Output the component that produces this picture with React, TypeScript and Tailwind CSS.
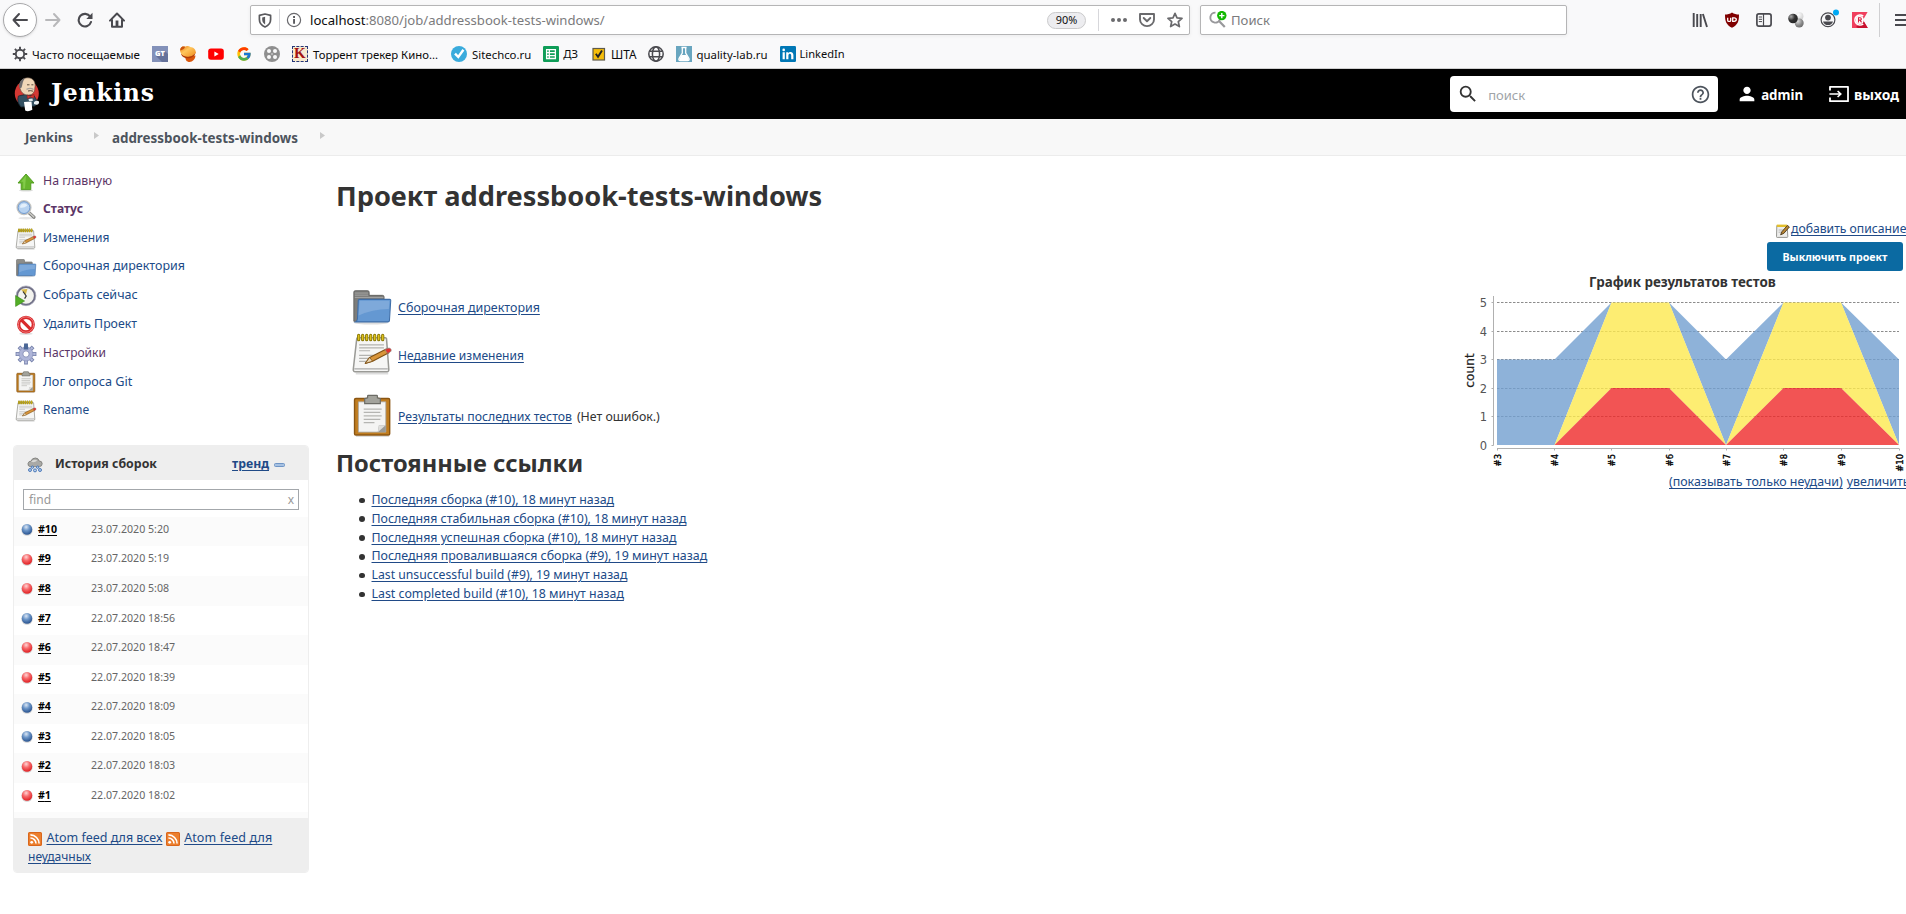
import type { ReactNode } from 'react';
import { FcGoogle } from 'react-icons/fc';
import { MdHelpOutline, MdPerson, MdSearch } from 'react-icons/md';

/* ---------- browser chrome icons ---------- */

const Svg = ({ w = 16, h = 16, vb = '0 0 16 16', children, className = '' }: { w?: number; h?: number; vb?: string; children: ReactNode; className?: string }) => (
  <svg width={w} height={h} viewBox={vb} fill="none" className={`block shrink-0 ${className}`}>
    {children}
  </svg>
);

const ArrowLeft = () => (
  <Svg>
    <path d="M15 8H1.5M7 2L1.5 8L7 14" stroke="#4a4a4f" strokeWidth="2" strokeLinecap="round" strokeLinejoin="round" />
  </Svg>
);
const ArrowRight = () => (
  <Svg>
    <path d="M1 8H14.5M9 2L14.5 8L9 14" stroke="#b8b8ba" strokeWidth="2" strokeLinecap="round" strokeLinejoin="round" />
  </Svg>
);
const Reload = () => (
  <Svg>
    <path d="M13.2 4.6A6.3 6.3 0 1 0 14 10" stroke="#4a4a4f" strokeWidth="2.1" strokeLinecap="round" />
    <path d="M15.5 0.8V7H9.3Z" fill="#4a4a4f" />
  </Svg>
);
const Home = () => (
  <Svg>
    <path d="M1 8.6L8 1.5L15 8.6M3 8V14.8H13V8" stroke="#4a4a4f" strokeWidth="2" strokeLinecap="round" strokeLinejoin="round" />
    <path d="M6.6 8.5h2.8V15H6.6z" fill="#4a4a4f" />
  </Svg>
);
const Shield = () => (
  <Svg w={14} h={15} vb="0 0 14 15">
    <path d="M7 1L12.6 2.4V6.5C12.6 10 10.3 12.6 7 14C3.7 12.6 1.4 10 1.4 6.5V2.4Z" stroke="#5a5a5e" strokeWidth="1.7" strokeLinejoin="round" />
    <path d="M7.1 3.7L4.2 4.5V6.7C4.2 8.9 5.4 10.4 7.1 11.4Z" fill="#5a5a5e" />
  </Svg>
);
const Info = () => (
  <Svg>
    <circle cx="8" cy="8" r="6.6" stroke="#6a6a6e" strokeWidth="1.2" />
    <path d="M7.1 7h1.9v4.8H7.1zM7.1 4.1h1.9v1.8H7.1z" fill="#5a5a5e" />
  </Svg>
);
const Dots = () => (
  <Svg w={18}>
    <circle cx="3" cy="8" r="2" fill="#6a6a6d" />
    <circle cx="9" cy="8" r="2" fill="#6a6a6d" />
    <circle cx="15" cy="8" r="2" fill="#6a6a6d" />
  </Svg>
);
const Pocket = () => (
  <Svg>
    <path d="M1 2H15V7.5A7 6.6 0 0 1 1 7.5Z" stroke="#6a6a6d" strokeWidth="1.9" strokeLinejoin="round" />
    <path d="M4.7 6L8 9.2L11.3 6" stroke="#6a6a6d" strokeWidth="1.9" strokeLinecap="round" strokeLinejoin="round" />
  </Svg>
);
const Star = () => (
  <Svg>
    <path d="M8 1.3L10 5.9L15 6.4L11.3 9.7L12.4 14.6L8 12.1L3.6 14.6L4.7 9.7L1 6.4L6 5.9Z" stroke="#6a6a6d" strokeWidth="1.7" strokeLinejoin="round" />
  </Svg>
);
const SearchAdd = () => (
  <Svg w={18} h={18} vb="0 0 18 18">
    <path d="M6.5 1.6A5 5 0 1 0 11 8.4" stroke="#98989b" strokeWidth="1.9" />
    <path d="M10 10L15.8 16" stroke="#98989b" strokeWidth="2.2" />
    <circle cx="12.8" cy="4.6" r="4.7" fill="#12b800" />
    <path d="M12.8 2V7.2M10.2 4.6H15.4" stroke="#fff" strokeWidth="1.4" />
  </Svg>
);
const Library = () => (
  <Svg>
    <path d="M1.7 1V15M5.2 2V15M8.7 2V15M10.9 2L15 15" stroke="#4a4a4f" strokeWidth="1.9" />
  </Svg>
);
const UBlock = () => (
  <Svg>
    <path d="M8 0.4C10 1.9 12.5 2.4 15 2.4C15 9.5 13.8 12.6 8 15.7C2.2 12.6 1 9.5 1 2.4C3.5 2.4 6 1.9 8 0.4Z" fill="#800000" />
    <path d="M3.7 5.8V8.4Q3.7 9.4 4.8 9.4H5.7Q6.7 9.4 6.7 8.4V5.8M8.7 5.9V9.4H10.1Q12.3 9.2 12.3 7.6T10.1 5.9Z" stroke="#fff" strokeWidth="1.3" />
  </Svg>
);
const Sidebar = () => (
  <Svg>
    <rect x="0.9" y="1.9" width="14.2" height="12.2" rx="2" stroke="#4a4a4f" strokeWidth="1.7" />
    <path d="M7.5 2V14" stroke="#4a4a4f" strokeWidth="1.2" />
    <path d="M2.8 5H6M2.8 7.3H6M2.8 9.6H6" stroke="#4a4a4f" strokeWidth="1" />
  </Svg>
);
const Spheres = () => (
  <Svg>
    <defs>
      <radialGradient id="sphDark" cx="0.3" cy="0.3" r="0.8"><stop offset="0" stopColor="#aaa" /><stop offset="0.5" stopColor="#333" /><stop offset="1" stopColor="#222" /></radialGradient>
      <radialGradient id="sphGrey" cx="0.35" cy="0.3" r="0.8"><stop offset="0" stopColor="#ddd" /><stop offset="0.6" stopColor="#888" /><stop offset="1" stopColor="#666" /></radialGradient>
      <radialGradient id="sphLight" cx="0.35" cy="0.3" r="0.8"><stop offset="0" stopColor="#fff" /><stop offset="1" stopColor="#ccc" /></radialGradient>
    </defs>
    <circle cx="11.5" cy="4.2" r="3.9" fill="url(#sphLight)" />
    <circle cx="11.2" cy="11" r="4.5" fill="url(#sphGrey)" />
    <circle cx="5" cy="6.5" r="4.8" fill="url(#sphDark)" />
  </Svg>
);
const Account = () => (
  <Svg w={20} h={20} vb="0 0 20 20">
    <circle cx="8" cy="11.8" r="6.9" stroke="#4a4a4f" strokeWidth="1.2" />
    <circle cx="8" cy="9.6" r="2.9" fill="#4a4a4f" />
    <path d="M3 13.4H13C12.4 15.8 10.4 17 8 17S3.6 15.8 3 13.4Z" fill="#4a4a4f" />
    <circle cx="16" cy="4.6" r="3" fill="#00a9f4" />
  </Svg>
);
const Checker = () => (
  <Svg>
    <path d="M0 0H15.6L11 8L15.8 16H0Z" fill="#f0405e" />
    <path d="M4 15L11 8L15.8 16H6Z" fill="#c8102e" />
    <path d="M11.2 4.2A5 5 0 1 0 11.2 11.8" stroke="#fff" strokeWidth="1.7" />
    <circle cx="7.8" cy="8" r="4" fill="#fff" />
    <path d="M6.5 10.4V5.8H8.1Q9.3 5.8 9.3 7T8.1 8.1H6.8M8.1 8.1L9.5 10.4" stroke="#d81e3c" strokeWidth="1.1" />
  </Svg>
);

/* ---------- bookmark icons ---------- */

const Gear = () => (
  <Svg>
    <g stroke="#4a4a4f" strokeWidth="1.9">
      <path d="M8 0.8V3.4M8 12.6V15.2M0.8 8H3.4M12.6 8H15.2M2.9 2.9L4.8 4.8M11.2 11.2L13.1 13.1M2.9 13.1L4.8 11.2M11.2 4.8L13.1 2.9" />
      <circle cx="8" cy="8" r="4.2" />
    </g>
  </Svg>
);
const GT = () => (
  <div className="relative flex size-4 items-center justify-center overflow-hidden bg-[#8391b9] font-['Open_Sans'] text-[7.5px] font-extrabold text-white">
    <svg width="16" height="16" className="absolute inset-0"><path d="M4 10L13 5L16 8V16H10Z" fill="#66729a" /></svg>
    <span className="relative">GT</span>
  </div>
);
const Ball = () => (
  <Svg>
    <defs>
      <linearGradient id="ballTop" x1="0" y1="0" x2="1" y2="1"><stop offset="0" stopColor="#e8780f" /><stop offset="0.4" stopColor="#ffc65c" /><stop offset="1" stopColor="#ee8a1c" /></linearGradient>
    </defs>
    <path d="M5.4 9.5H15.4C15.6 13 12.4 16 9.6 16C6.6 16 5 14 5.4 9.5Z" fill="#d9560c" />
    <path d="M1 7C4 11.5 10 10.5 15.8 6C14.6 11.6 9.6 12.9 5.4 12C3 11.4 1 9.5 1 7Z" fill="#b23c08" />
    <path d="M0.3 3C1.6 0 3.6 0.6 5 0.8C6.6 -0.4 9 0 10.4 1C13.6 1.2 16 3.8 15.9 6.6C13.6 10 10 10.8 7.4 10.8C2.6 10.6 -0.6 7 0.3 3Z" fill="url(#ballTop)" />
    <path d="M0.3 3C1.6 0 3.6 0.6 5 0.8C4.6 2.6 3.4 3.8 0.3 4.4Z" fill="#c9530c" />
  </Svg>
);
const YouTube = () => (
  <Svg>
    <rect x="0.2" y="2.4" width="15.6" height="11.4" rx="2.8" fill="#f00" />
    <path d="M6.4 5.6V10.6L10.7 8.1Z" fill="#fff" />
  </Svg>
);
const Reel = () => (
  <Svg>
    <circle cx="8" cy="8" r="8" fill="#8f8f8f" />
    <g fill="#f9f9fa"><circle cx="5" cy="5" r="2" /><circle cx="11" cy="5" r="2" /><circle cx="5" cy="11" r="2" /><circle cx="11" cy="11" r="2" /><circle cx="8" cy="8" r="0.7" /></g>
  </Svg>
);
const KStamp = () => (
  <div className="flex size-4 items-center justify-center border border-dashed border-[#26377a] bg-[#f6e9cf] font-['Liberation_Serif'] text-[15px] leading-none font-bold text-[#a31212]">K</div>
);
const Tick = () => (
  <Svg>
    <circle cx="8" cy="8" r="8" fill="#3aabdc" />
    <path d="M4 7.6L7.3 11L12.4 3.8" stroke="#fff" strokeWidth="2.4" />
  </Svg>
);
const Sheet = () => (
  <Svg>
    <rect width="16" height="16" rx="1.2" fill="#0f9d58" />
    <path d="M3.6 3.7H12.4V12.5H3.6ZM3.6 6.6H12.4M3.6 9.6H12.4M6.3 3.7V12.5" stroke="#fff" strokeWidth="1.3" />
  </Svg>
);
const YellowCheck = () => (
  <Svg>
    <rect x="2" y="2.5" width="11.5" height="11.5" fill="#f5bd0b" stroke="#5f5a4a" strokeWidth="1.2" />
    <path d="M4.8 7.8L7 10.8L11 4.5" stroke="#222" strokeWidth="1.9" />
  </Svg>
);
const GlobeIcon = () => (
  <Svg>
    <g stroke="#4a4a4f" strokeWidth="1.5">
      <circle cx="8" cy="8" r="7.2" />
      <ellipse cx="8" cy="8" rx="3.6" ry="7.2" />
      <path d="M1.6 5.3H14.4M1.6 10.7H14.4" />
    </g>
  </Svg>
);
const Flask = () => (
  <Svg>
    <rect width="16" height="16" fill="#68a5bf" />
    <path d="M5.4 1.5H10.6M6.3 2V7L3 12.6Q2.4 14.6 4.4 14.6H11.6Q13.6 14.6 13 12.6L9.7 7V2" stroke="#fff" strokeWidth="1.3" />
    <path d="M5.5 9H10.5L13 13.2L12 14.5H4L3.2 13.2Z" fill="#fff" />
  </Svg>
);
const LinkedIn = () => (
  <Svg>
    <rect width="16" height="16" rx="1.2" fill="#0077b5" />
    <path d="M2.6 6.2H4.8V13.2H2.6ZM6.2 6.2H8.3V7.2C9.6 5.3 13.4 5.6 13.4 9V13.2H11.2V9.4C11.2 7.2 8.4 7.4 8.4 9.4V13.2H6.2Z" fill="#fff" />
    <circle cx="3.7" cy="3.9" r="1.3" fill="#fff" />
  </Svg>
);

/* ---------- Jenkins icons ---------- */

const Butler = () => (
  <Svg w={26} h={36} vb="0 0 26 36">
    <ellipse cx="12.8" cy="17.4" rx="12" ry="13" fill="#d33833" />
    <path d="M4.4 20L11 18.6L20 19.6L23.6 26L21 30L7 31Q2.4 26 4.4 20Z" fill="#335061" stroke="#1c2b36" strokeWidth="0.8" />
    <path d="M6 12.4C4 6 9 1.5 14 1.8C20 2 22 7 20.8 12C20.8 16 18.6 19 14.8 19C10 19 7.4 17 6 12.4Z" fill="#f0d6b7" stroke="#5b4a3c" strokeWidth="0.6" />
    <path d="M5.8 12.4C4 6 8 2.4 11 2.2C8.5 5 8.6 8.6 7.6 11.6Z" fill="#6d6b6d" />
    <path d="M13 8.8H15.5M17.4 8.8H19.4M14 15Q16.5 14.2 19 15.2" stroke="#4a3b30" strokeWidth="0.9" />
    <path d="M12.5 13.4Q16.5 11.4 19.6 13.6" stroke="#a8a09a" strokeWidth="1.2" />
    <path d="M13 19L16.3 20.1L20 18.4V22.2L16.6 21.2L13.4 22.8Z" fill="#d33833" stroke="#7d1c1a" strokeWidth="0.5" />
    <path d="M14.5 23L18.5 22.4L18.8 25H15Z" fill="#dfe6ea" />
    <path d="M10 26L17.5 25.4L18.3 33.8Q14.5 36 11.2 34.6Z" fill="#fff" />
    <path d="M20 26Q23 23.8 25 25.6Q25.6 28.6 22.4 28.8L20 28Z" fill="#e8eef0" />
  </Svg>
);
const Logout = () => (
  <Svg w={20} h={18} vb="0 0 20 18">
    <path d="M1 5.4V1.8H19V16.2H1V12.4" stroke="#fff" strokeWidth="1.8" strokeLinejoin="round" />
    <path d="M0.4 9H11.4M8.6 6L11.8 9L8.6 12" stroke="#fff" strokeWidth="1.6" />
  </Svg>
);

const Up = () => (
  <Svg w={22} h={22} vb="0 0 22 22">
    <ellipse cx="11" cy="19.3" rx="7" ry="1.3" fill="#ddd" />
    <path d="M11 3L19 12H15.8V18.6H6.2V12H3Z" fill="#66b52c" stroke="#4c981a" strokeWidth="0.9" strokeLinejoin="round" />
    <path d="M11 4.6L6 10.8H8.2V17.6H10Z" fill="#8fd455" opacity="0.7" />
  </Svg>
);
const Magnifier = () => (
  <Svg w={22} h={22} vb="0 0 22 22">
    <ellipse cx="11" cy="19.2" rx="7.6" ry="1.2" fill="#e6e6e6" />
    <path d="M14 13.8L19 18.2" stroke="#7b7b78" strokeWidth="3.2" strokeLinecap="round" />
    <path d="M14.4 13.9L18.8 17.9" stroke="#c8c8c4" strokeWidth="1.5" strokeLinecap="round" />
    <circle cx="9" cy="8.6" r="6.9" fill="#b7d2f0" stroke="#c4c4c1" strokeWidth="1.4" />
    <circle cx="9" cy="8.6" r="5.9" stroke="#5d8cc9" strokeWidth="0.8" />
    <path d="M5 8.5A4 4 0 0 1 12.4 6.4Q9 9.4 5 8.5Z" fill="#e3effb" />
  </Svg>
);
const Notepad = ({ s = 22 }: { s?: number }) => (
  <Svg w={s} h={s} vb="0 0 44 44">
    <path d="M5 42.5H39" stroke="#ddd" strokeWidth="2" />
    <path d="M6 6Q6 5 7 5H36Q37 5 37.2 6L39.6 38Q39.8 40.6 37.6 40.6H4.4Q2.2 40.6 2.4 38Z" fill="#f6f6f5" stroke="#9a9a96" strokeWidth="1.6" />
    <path d="M3.4 37.6H38.6" stroke="#aaa" strokeWidth="1.3" />
    <path d="M8.5 12.5H34.5M8.5 15.6H34.5M8.5 18.6H20M8.5 23.4H30M8.5 26.6H28M8.5 29.8H20" stroke="#b3b3b0" strokeWidth="1.2" />
    <path d="M8 2.5V7M12.2 2.5V7M16.4 2.5V7M20.6 2.5V7M24.8 2.5V7M29 2.5V7M33.2 2.5V7" stroke="#8c7a06" strokeWidth="3.4" strokeLinecap="round" />
    <path d="M8 2.6V6.8M12.2 2.6V6.8M16.4 2.6V6.8M20.6 2.6V6.8M24.8 2.6V6.8M29 2.6V6.8M33.2 2.6V6.8" stroke="#dcc01e" strokeWidth="1.6" strokeLinecap="round" />
    <path d="M15 31.8L19.5 25.6L37 16.8L39.6 20.8L22.6 29.6Z" fill="#d9953a" stroke="#7f5114" strokeWidth="1.2" strokeLinejoin="round" />
    <path d="M15 31.8L19.5 25.6L22.6 29.6Z" fill="#ecd7b4" stroke="#7f5114" strokeWidth="0.8" />
    <path d="M35.6 17.4L38.6 15.9Q41.4 15.2 42 17.4Q42.6 19.2 41 20L38.2 21.4Z" fill="#e4302f" stroke="#8a8a86" strokeWidth="0.7" />
  </Svg>
);
const Folder = ({ s = 22 }: { s?: number }) => (
  <Svg w={s} h={s} vb="0 0 44 44">
    <ellipse cx="21" cy="38.6" rx="18" ry="1.8" fill="#ddd" />
    <path d="M3 37V6.4Q3 5 4.4 5H17.6Q19 5 19 6.6V9.8H33Q34.6 9.8 34.6 11.4V37Z" fill="#7d7d7b" stroke="#5f5f5d" />
    <path d="M4 7.4H18M4 9.6H18M4 12H34" stroke="#aaaaa7" strokeWidth="0.9" />
    <path d="M7.6 15.2Q7.7 14 9 14H40.6Q41.8 14 41.6 15.4L40.3 36Q40.2 37.6 38.6 37.6H4.8Q6.6 36.6 6.8 34Z" fill="#6498d2" stroke="#3f6ea8" strokeWidth="1.1" />
    <path d="M9 15.4H40.2L39.6 24Q22 24 8 31Z" fill="#8fb4e0" opacity="0.6" />
  </Svg>
);
const ClockPlay = () => (
  <Svg w={22} h={22} vb="0 0 22 22">
    <circle cx="11" cy="10.8" r="8.9" fill="#f3f3ee" stroke="#6f6f86" strokeWidth="2" />
    <circle cx="11" cy="10.8" r="9.9" stroke="#a6a6b8" strokeWidth="0.7" />
    <path d="M6 4.6L10.8 9.8L12.4 4Z" fill="#d7b84a" />
    <path d="M8 6.5L11.2 11L9.6 13.6" stroke="#333" strokeWidth="1.2" />
    <path d="M0.6 10.6L9.6 16L0.6 21.4Z" fill="#53ae27" stroke="#3b8915" strokeWidth="0.6" />
  </Svg>
);
const Forbidden = () => (
  <Svg w={22} h={22} vb="0 0 22 22">
    <ellipse cx="11" cy="19.8" rx="6.6" ry="1" fill="#ddd" />
    <circle cx="11" cy="10.6" r="7.3" fill="#fff" stroke="#d92a2c" strokeWidth="3.2" />
    <path d="M6 5.7L16 15.6" stroke="#d92a2c" strokeWidth="3.2" />
    <circle cx="11" cy="10.6" r="7.7" stroke="#f4898a" strokeWidth="0.8" />
  </Svg>
);
const Cog = () => (
  <Svg w={22} h={22} vb="0 0 22 22">
    <g stroke="#7580aa" strokeWidth="3.8">
      <path d="M11 0.6V21.4M0.6 11H21.4M3.9 3.9L18.1 18.1M3.9 18.1L18.1 3.9" />
    </g>
    <g stroke="#b3badb" strokeWidth="2.3">
      <path d="M11 1.4V20.6M1.4 11H20.6M4.5 4.5L17.5 17.5M4.5 17.5L17.5 4.5" />
    </g>
    <circle cx="11" cy="11" r="7" fill="#aeb5d8" stroke="#8089b3" strokeWidth="0.6" />
    <path d="M9.3 0.8H12.7L13.4 6.4H8.6Z" fill="#4a6796" />
    <circle cx="11" cy="11" r="3.2" fill="#fff" stroke="#8a92ba" strokeWidth="1" />
  </Svg>
);
const Clipboard = ({ s = 22 }: { s?: number }) => (
  <Svg w={s} h={s} vb="0 0 44 44">
    <path d="M5 43.4H39" stroke="#ddd" strokeWidth="1.2" />
    <rect x="3.6" y="4.6" width="36" height="37.4" rx="1.4" fill="#c07d20" stroke="#8a5512" strokeWidth="1.4" />
    <path d="M7.6 8H35.6V39H7.6Z" fill="#f4f4f3" stroke="#a9a9a6" strokeWidth="0.8" />
    <path d="M35.6 32H28.6L27.4 39H35.6Z" fill="#9b9b98" />
    <path d="M28.4 32H35.4L27.6 39Z" fill="#dededc" />
    <path d="M13 15.4H31.4M13 18.9H30M13 22.4H31.4M13 25.9H30M13 29.4H24" stroke="#b5b5b2" strokeWidth="1.3" />
    <path d="M17 4V2Q17 1.4 17.6 1.4H26.4Q27 1.4 27 2V4L30 4.8V9.8H14V4.8Z" fill="#a3a39c" stroke="#6c6c66" strokeWidth="1.2" />
  </Svg>
);
const Rain = () => (
  <Svg>
    <g fill="#a9a9a6" stroke="#777774" strokeWidth="0.8">
      <path d="M3 9.6Q0.6 9 1 6.4Q1.6 4 4 4.2Q5 1 8.4 1Q11.6 1.2 12.2 4Q15.2 4 15.2 6.8Q15 9.4 12.6 9.6Z" />
    </g>
    <path d="M4 4.6Q7 1.4 10.4 3.6Q7 6.4 4 4.6Z" fill="#d8d8d6" />
    <g fill="#b7cdea" stroke="#3f70b3" strokeWidth="0.9">
      <circle cx="3" cy="13" r="1.5" /><circle cx="8" cy="13.4" r="1.5" /><circle cx="13" cy="13" r="1.5" /><circle cx="5.4" cy="10.2" r="1.2" /><circle cx="10.6" cy="10.2" r="1.2" />
    </g>
  </Svg>
);
const Orb = ({ ok }: { ok: boolean }) => (
  <Svg w={12} h={13} vb="0 0 12 13">
    <defs>
      <radialGradient id={ok ? 'orbBlue' : 'orbRed'} cx="0.42" cy="0.28" r="0.72">
        <stop offset="0" stopColor={ok ? '#dbe6f4' : '#ffd5d5'} />
        <stop offset="0.45" stopColor={ok ? '#6d97c9' : '#f76a6c'} />
        <stop offset="1" stopColor={ok ? '#28528f' : '#e01f22'} />
      </radialGradient>
    </defs>
    <ellipse cx="6" cy="7" rx="5.8" ry="5.9" fill="#d9d9d9" />
    <ellipse cx="6" cy="6.4" rx="5.2" ry="5.4" fill={ok ? 'url(#orbBlue)' : 'url(#orbRed)'} />
  </Svg>
);
const Rss = () => (
  <svg width="14" height="14" viewBox="0 0 14 14" fill="none" className="mr-[4.5px] inline-block align-[-3.5px]">
    <rect width="14" height="14" rx="1.6" fill="#ec7f2e" />
    <rect x="0.5" y="0.5" width="13" height="13" rx="1.4" stroke="#d9661c" />
    <circle cx="3.7" cy="10.3" r="1.4" fill="#fff" />
    <path d="M2.4 6A5.6 5.6 0 0 1 8 11.6M2.4 2.9A8.7 8.7 0 0 1 11.1 11.6" stroke="#fff" strokeWidth="1.6" />
  </svg>
);
const EditNote = () => (
  <Svg w={14} h={14} vb="0 0 14 14">
    <path d="M0.8 1.6H11.2L11.8 12.6Q11.8 13.4 11 13.4H1.2Q0.4 13.4 0.5 12.6Z" fill="#ededeb" stroke="#8b8b87" strokeWidth="0.9" />
    <path d="M0.8 0.6H11V3H0.8Z" fill="#e3bf2d" />
    <path d="M2.6 6H8M2.6 8.2H6" stroke="#aaa" strokeWidth="0.8" />
    <path d="M4.6 10.8L6 7.6L11.4 1.4L13.4 3L7.8 9.4Z" fill="#b98533" stroke="#49381b" strokeWidth="0.9" />
  </Svg>
);

/* ---------- sections ---------- */

const bookmarks: { icon: ReactNode; text?: string; left: string; size?: string }[] = [
  { icon: <Gear />, text: 'Часто посещаемые', left: 'ml-[12px]', size: 'text-[11.55px]' },
  { icon: <GT />, left: 'ml-[12px]' },
  { icon: <Ball />, left: 'ml-[12px]' },
  { icon: <YouTube />, left: 'ml-[12px]' },
  { icon: <FcGoogle size={16} />, left: 'ml-[12px]' },
  { icon: <Reel />, left: 'ml-[12px]' },
  { icon: <KStamp />, text: 'Торрент трекер Кино...', left: 'ml-[12px]', size: 'ml-[1px] text-[11.35px]' },
  { icon: <Tick />, text: 'Sitechco.ru', left: 'ml-[13px]', size: 'ml-[1px] text-[11.35px]' },
  { icon: <Sheet />, text: 'ДЗ', left: 'ml-[12px]', size: 'text-[11.3px]' },
  { icon: <YellowCheck />, text: 'ШТА', left: 'ml-[13px]', size: 'text-[11.8px]' },
  { icon: <GlobeIcon />, left: 'ml-[12px]' },
  { icon: <Flask />, text: 'quality-lab.ru', left: 'ml-[12px]', size: 'text-[11.4px]' },
  { icon: <LinkedIn />, text: 'LinkedIn', left: 'ml-[12px]', size: 'text-[11.1px]' },
];

const Toolbar = () => (
  <div className="h-[69px] border-b border-[#cfcfcf] bg-[#f9f9fa] text-[#0c0c0d]">
    <div className="flex h-[40px] items-center">
      <div className="ml-[3px] flex size-[34px] shrink-0 items-center justify-center rounded-full border border-[#a9a9ab] bg-white shadow-sm">
        <ArrowLeft />
      </div>
      <div className="ml-[8px]"><ArrowRight /></div>
      <div className="ml-[16px]"><Reload /></div>
      <div className="ml-[16px]"><Home /></div>
      <div className="ml-[125px] flex h-[30px] w-[940px] shrink-0 items-center rounded-[2px] border border-[#b5b5b6] bg-white shadow-[0_1px_4px_rgba(0,0,0,0.06)]">
        <div className="ml-[7px]"><Shield /></div>
        <div className="ml-[7px] h-[22px] w-px bg-[#d7d7db]" />
        <div className="ml-[6px]"><Info /></div>
        <div className="mt-[2px] ml-[8px] text-[13.14px] whitespace-pre text-[#0c0c0d]">
          localhost<span className="text-[#7b7b7d]">:8080/job/addressbook-tests-windows/</span>
        </div>
        <div className="mt-[1px] ml-auto flex h-[17px] w-[39px] items-center justify-center rounded-full border border-[#cacacb] bg-[#ededf0] text-[10.9px]">90%</div>
        <div className="ml-[12px] h-[22px] w-px bg-[#d7d7db]" />
        <div className="ml-[10px]"><Dots /></div>
        <div className="ml-[12px]"><Pocket /></div>
        <div className="mr-[6px] ml-[12px]"><Star /></div>
      </div>
      <div className="ml-[10px] flex h-[30px] w-[367px] shrink-0 items-center rounded-[2px] border border-[#b5b5b6] bg-white shadow-[0_1px_4px_rgba(0,0,0,0.06)]">
        <div className="ml-[8px]"><SearchAdd /></div>
        <div className="mt-[2px] ml-[4px] text-[13.1px] text-[#7b7b7d]">Поиск</div>
      </div>
      <div className="ml-[125px]"><Library /></div>
      <div className="ml-[16px]"><UBlock /></div>
      <div className="ml-[16px]"><Sidebar /></div>
      <div className="ml-[16px]"><Spheres /></div>
      <div className="-mt-[4px] ml-[16px]"><Account /></div>
      <div className="ml-[12px]"><Checker /></div>
      <div className="ml-[11px] h-[34px] w-px shrink-0 bg-[#d0d0d2]" />
      <div className="ml-[15px] flex w-[16px] shrink-0 flex-col gap-[3px]">
        <div className="h-[2px] bg-[#4a4a4f]" />
        <div className="h-[2px] bg-[#4a4a4f]" />
        <div className="h-[2px] bg-[#4a4a4f]" />
      </div>
    </div>
    <div className="flex h-[28px] items-center">
      {bookmarks.map((b, i) => (
        <div key={i} className={`flex items-center gap-[4px] whitespace-nowrap ${b.left}`}>
          <div className="shrink-0">{b.icon}</div>
          {b.text && <span className={`pt-[1px] ${b.size}`}>{b.text}</span>}
        </div>
      ))}
    </div>
  </div>
);

const Header = () => (
  <div className="flex h-[50px] items-center bg-black text-white">
    <div className="ml-[14px]"><Butler /></div>
    <div className="-mt-[1px] ml-[11px] font-['DejaVu_Serif'] text-[23.5px] font-bold tracking-[0.7px]">Jenkins</div>
    <div className="ml-auto flex h-[36px] w-[268px] items-center rounded-[4px] bg-white">
      <MdSearch size={22} className="ml-[7px] text-[#333]" />
      <span className="mt-[3px] ml-[9px] text-[13px] text-[#a0a4a8]">поиск</span>
      <MdHelpOutline size={21} className="mr-[7px] ml-auto text-[#4d545d]" />
    </div>
    <MdPerson size={22} className="ml-[18px]" />
    <span className="mt-[3px] ml-[3px] text-[13.3px] font-bold">admin</span>
    <div className="ml-[26px]"><Logout /></div>
    <span className="mt-[3px] mr-[7px] ml-[5px] text-[13.8px] font-bold">выход</span>
  </div>
);

const Crumb = () => (
  <svg width="5" height="7" viewBox="0 0 5 7"><path d="M0 0L5 3.5L0 7Z" fill="#c9c9c9" /></svg>
);

const Breadcrumbs = () => (
  <div className="flex h-[37px] items-center border-b border-[#ececec] bg-[#f8f8f8] font-bold text-[#4d545d]">
    <span className="mt-[2px] ml-[25px] text-[13.15px]">Jenkins</span>
    <span className="-mt-[3px] ml-[21px]"><Crumb /></span>
    <span className="mt-[2px] ml-[13px] text-[13.38px]">addressbook-tests-windows</span>
    <span className="-mt-[3px] ml-[22px]"><Crumb /></span>
  </div>
);

const tasks: { icon: ReactNode; text: string; cls: string }[] = [
  { icon: <Up />, text: 'На главную', cls: 'text-[#5c3566] text-[12.33px]' },
  { icon: <Magnifier />, text: 'Статус', cls: 'text-[#5c3566] text-[12.1px] font-bold' },
  { icon: <Notepad />, text: 'Изменения', cls: 'text-[#204a87] text-[12px]' },
  { icon: <Folder />, text: 'Сборочная директория', cls: 'text-[#204a87] text-[12.46px]' },
  { icon: <ClockPlay />, text: 'Собрать сейчас', cls: 'text-[#204a87] text-[12.55px]' },
  { icon: <Forbidden />, text: 'Удалить Проект', cls: 'text-[#204a87] text-[12.3px]' },
  { icon: <Cog />, text: 'Настройки', cls: 'text-[#5c3566] text-[12.04px]' },
  { icon: <Clipboard />, text: 'Лог опроса Git', cls: 'text-[#204a87] text-[12.7px]' },
  { icon: <Notepad />, text: 'Rename', cls: 'text-[#204a87] text-[11.95px]' },
];

const builds: [number, string, boolean][] = [
  [10, '23.07.2020 5:20', true],
  [9, '23.07.2020 5:19', false],
  [8, '23.07.2020 5:08', false],
  [7, '22.07.2020 18:56', true],
  [6, '22.07.2020 18:47', false],
  [5, '22.07.2020 18:39', false],
  [4, '22.07.2020 18:09', true],
  [3, '22.07.2020 18:05', true],
  [2, '22.07.2020 18:03', false],
  [1, '22.07.2020 18:02', false],
];

const link = 'text-[#204a87] underline decoration-1 underline-offset-2';

const Side = () => (
  <div className="w-[309px] shrink-0">
    <div className="pt-[10px] pl-[15px]">
      {tasks.map((t) => (
        <div key={t.text} className="flex h-[28.67px] items-center">
          <div className="pt-[3px]">{t.icon}</div>
          <span className={`mt-[1px] ml-[6px] whitespace-nowrap ${t.cls}`}>{t.text}</span>
        </div>
      ))}
    </div>
    <div className="mt-[21px] ml-[13px] h-[428px] overflow-hidden rounded-[4px] border border-[#eee]">
      <div className="flex h-[34px] items-center bg-[#eee]">
        <div className="mt-[4px] ml-[13px]"><Rain /></div>
        <span className="mt-[2px] ml-[12px] text-[12.37px] font-bold text-[#333]">История сборок</span>
        <span className="mt-[2px] mr-[5px] ml-auto text-[12.26px] font-bold text-[#204a87] underline underline-offset-2">тренд</span>
        <div className="mt-[5px] mr-[23px] h-[4px] w-[11px] rounded-[1.5px] border border-[#6f95c5] bg-[#a6c1e2]" />
      </div>
      <div className="px-[9px] pt-[9px] pb-[7px]">
        <div className="flex h-[21px] items-center justify-between border border-[#a3a7ab] px-[5px] text-[12px] text-[#999]">
          <span className="mt-[2px]">find</span>
          <span className="mt-[2px] -mr-[1px]">x</span>
        </div>
      </div>
      {builds.map(([n, date, ok], i) => (
        <div key={n} className={`flex h-[29.55px] text-[10.62px] ${i % 2 ? 'bg-white' : 'bg-[#fbfbfb]'}`}>
          <div className="mt-[6.4px] ml-[7px]"><Orb ok={ok} /></div>
          <div className="mt-[5px] ml-[5px] w-[53px] font-bold text-black underline decoration-1 underline-offset-2">#{n}</div>
          <div className="mt-[5px] text-[#666]">{date}</div>
        </div>
      ))}
      <div className="h-[6px] bg-[#fbfbfb]" />
      <div className="h-[60px] bg-[#eee] pt-[10px] pl-[14px] text-[12.48px] leading-[19px] whitespace-nowrap">
        <Rss /><span className={link}>Atom feed для всех</span>{' '}<Rss /><span className={`tracking-[0.12px] ${link}`}>Atom feed для</span>
        <br />
        <span className={`text-[12.05px] ${link}`}>неудачных</span>
      </div>
    </div>
  </div>
);

const permalinks: [string, string][] = [
  ['Последняя сборка (#10), 18 минут назад', 'text-[12.4px]'],
  ['Последняя стабильная сборка (#10), 18 минут назад', 'text-[12.38px]'],
  ['Последняя успешная сборка (#10), 18 минут назад', 'text-[12.4px]'],
  ['Последняя провалившаяся сборка (#9), 19 минут назад', 'text-[12.42px]'],
  ['Last unsuccessful build (#9), 19 минут назад', 'text-[12.24px]'],
  ['Last completed build (#10), 18 минут назад', 'text-[12.35px]'],
];

const xs = [37, 94.5, 151.5, 209, 266, 323.5, 381, 439];
const yAt = (v: number) => 156 - v * 28.5;
const area = (top: number[], bottom: number[]) =>
  [...top.map((v, i) => `${xs[i]},${yAt(v)}`), ...bottom.map((v, i) => `${xs[i]},${yAt(v)}`).reverse()].join(' ');
const total = [3, 3, 5, 5, 3, 5, 5, 3];
const skipped = [0, 0, 5, 5, 0, 5, 5, 0];
const failed = [0, 0, 2, 2, 0, 2, 2, 0];
const zero = [0, 0, 0, 0, 0, 0, 0, 0];

const Chart = () => (
  <svg width="446" height="184" viewBox="0 0 446 184" className="block">
    {[1, 2, 3, 4, 5].map((v) => (
      <path key={v} d={`M37 ${Math.floor(yAt(v)) + 0.5}H439`} stroke="#8c8c8c" strokeDasharray="2.5 1.5" />
    ))}
    <polygon points={area(total, skipped)} fill="#729fcf" fillOpacity="0.8" />
    <polygon points={area(skipped, failed)} fill="#fce94f" fillOpacity="0.8" />
    <polygon points={area(failed, zero)} fill="#ef2929" fillOpacity="0.8" />
    <path d="M33.5 7V156.5" stroke="#b0b0b0" />
    <path d="M37 159.5H439" stroke="#b0b0b0" />
    {[0, 1, 2, 3, 4, 5].map((v) => (
      <g key={v}>
        <path d={`M31.5 ${Math.floor(yAt(v)) + 0.5}H33.5`} stroke="#b0b0b0" />
        <text x="27" y={yAt(v) + 4.5} textAnchor="end" className="fill-[#555] font-['DejaVu_Sans'] text-[11.5px]">{v}</text>
      </g>
    ))}
    {xs.map((x, i) => (
      <g key={x}>
        <path d={`M${Math.floor(x) + 0.5} 159.5V161.5`} stroke="#b0b0b0" />
        <text transform={`translate(${x + 3.5} 165) rotate(-90)`} textAnchor="end" strokeWidth="0.35" className="fill-black stroke-black font-['DejaVu_Sans'] text-[8.4px]">#{i + 3}</text>
      </g>
    ))}
    <text transform="translate(13.5 81.5) rotate(-90)" textAnchor="middle" strokeWidth="0.2" className="fill-[#222] stroke-[#222] font-['DejaVu_Sans'] text-[12.2px]">count</text>
  </svg>
);

const Main = () => (
  <div className="flex min-w-0 flex-1 text-[#333]">
    <div className="ml-[27px] w-[700px]">
      <h1 className="mt-[20px] h-[40px] text-[27.2px] leading-[40px] font-bold whitespace-nowrap">Проект addressbook-tests-windows</h1>
      <div className="mt-[68px] ml-[15px] flex h-[46px] items-center">
        <Folder s={42} />
        <span className={`mt-[3px] ml-[5px] text-[12.46px] ${link}`}>Сборочная директория</span>
      </div>
      <div className="mt-[1px] ml-[15px] flex h-[48px] items-center">
        <div className="-mt-[2px]"><Notepad s={42} /></div>
        <span className={`mt-[2px] ml-[5px] text-[12.04px] ${link}`}>Недавние изменения</span>
      </div>
      <div className="mt-[12px] ml-[15px] flex h-[50px] items-center whitespace-pre">
        <div className="-mt-[2px]"><Clipboard s={43} /></div>
        <span className={`mt-[2px] ml-[4px] text-[12.26px] ${link}`}>Результаты последних тестов</span>
        <span className="mt-[2px] ml-[5px] text-[12.37px]">(Нет ошибок.)</span>
      </div>
      <h2 className="mt-[4px] h-[36px] text-[23.7px] leading-[36px] font-bold whitespace-nowrap">Постоянные ссылки</h2>
      <ul className="mt-[10px] leading-[18.8px]">
        {permalinks.map(([p, size]) => (
          <li key={p} className="flex h-[18.8px] items-center whitespace-nowrap">
            <span className="mr-[7px] ml-[23px] size-[5.5px] rounded-full bg-[#333]" />
            <span className={`${size} ${link}`}>{p}</span>
          </li>
        ))}
      </ul>
    </div>
    <div className="mt-[63px] ml-auto flex w-[446px] flex-col whitespace-nowrap">
      <div className="ml-[316px] flex h-[20px] items-center">
        <div className="mt-[4px] mr-[1px]"><EditNote /></div>
        <span className={`text-[12.2px] ${link}`}>добавить описание</span>
      </div>
      <div className="mt-[3px] ml-[307px] flex h-[29px] w-[136px] items-center justify-center rounded-[3px] bg-[#0b6aa2] pt-[2px] text-[10.63px] font-bold text-white">Выключить проект</div>
      <div className="mt-[2px] ml-[129px] h-[18px] text-[13.45px] leading-[18px] font-bold">График результатов тестов</div>
      <div className="-mt-[2px]"><Chart /></div>
      <div className="ml-[209px] flex gap-[4px] text-[12.42px] leading-[18px]">
        <span className={link}>(показывать только неудачи)</span>
        <span className={link}>увеличить</span>
      </div>
    </div>
  </div>
);

export default function App() {
  return (
    <div className="flex h-[914px] w-full flex-col overflow-hidden bg-white font-['Noto_Sans',sans-serif]">
      <Toolbar />
      <Header />
      <Breadcrumbs />
      <div className="flex flex-1">
        <Side />
        <Main />
      </div>
    </div>
  );
}
